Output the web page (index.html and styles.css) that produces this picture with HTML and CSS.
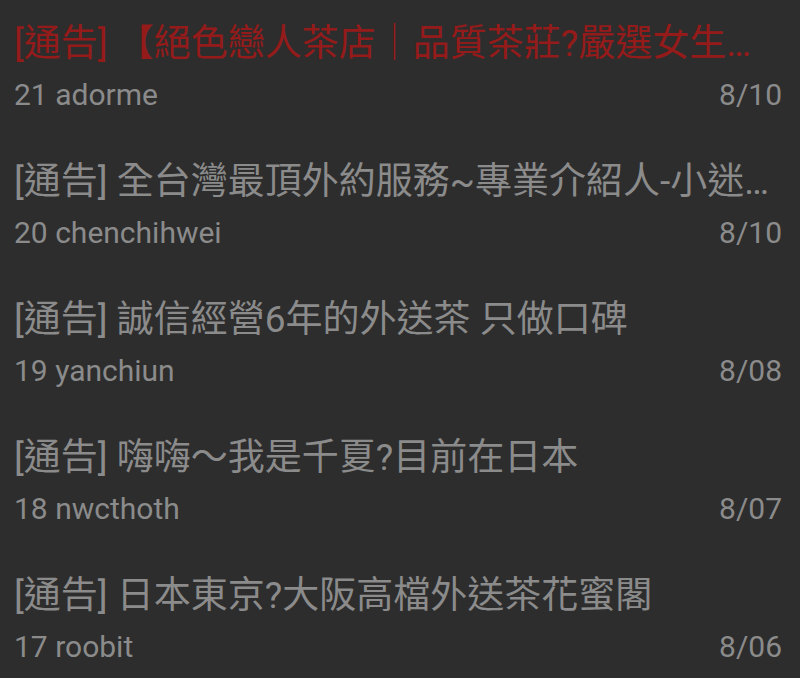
FILE: index.html
```html
<!DOCTYPE html>
<html lang="zh-Hant">
<head>
<meta charset="utf-8">
<title>通告</title>
<link rel="stylesheet" href="styles.css">
</head>
<body>
<ul class="list">
  <li class="item">
    <div class="title hot">[通告] 【絕色戀人茶店｜品質茶莊?嚴選女生…</div>
    <div class="meta"><span>21 adorme</span><span>8/10</span></div>
  </li>
  <li class="item">
    <div class="title">[通告] 全台灣最頂外約服務~專業介紹人-小迷…</div>
    <div class="meta"><span>20 chenchihwei</span><span>8/10</span></div>
  </li>
  <li class="item">
    <div class="title">[通告] 誠信經營6年的外送茶 只做口碑</div>
    <div class="meta"><span>19 yanchiun</span><span>8/08</span></div>
  </li>
  <li class="item">
    <div class="title">[通告] 嗨嗨～我是千夏?目前在日本</div>
    <div class="meta"><span>18 nwcthoth</span><span>8/07</span></div>
  </li>
  <li class="item">
    <div class="title">[通告] 日本東京?大阪高檔外送茶花蜜閣</div>
    <div class="meta"><span>17 roobit</span><span>8/06</span></div>
  </li>
</ul>
</body>
</html>
```
FILE: styles.css
```css
html, body {
  margin: 0;
  padding: 0;
  background: #2d2d2d;
}
body {
  width: 800px;
  height: 678px;
  overflow: hidden;
  font-family: Roboto, "Noto Sans CJK TC", sans-serif;
  color: #8b8b8b;
}
.list {
  list-style: none;
  margin: 0;
  padding: 0;
}
.item {
  height: 138px;
  box-sizing: border-box;
  padding: 19px 18px 0 14px;
}
.title {
  font-size: 37px;
  line-height: 50px;
  white-space: nowrap;
}
.title.hot {
  color: #951b1b;
}
.meta {
  margin-top: 6px;
  display: flex;
  justify-content: space-between;
  font-size: 30px;
  line-height: 40px;
}
```
